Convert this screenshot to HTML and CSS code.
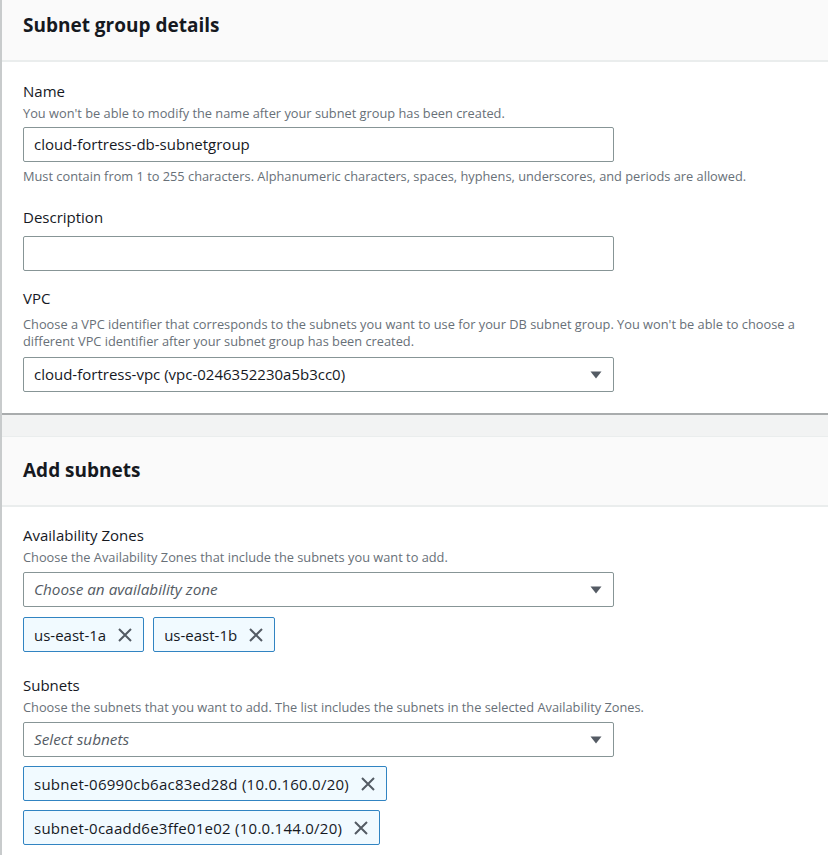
FILE: index.html
```html
<!DOCTYPE html>
<html lang="en">
<head>
<meta charset="utf-8">
<title>Subnet group</title>
<link rel="stylesheet" href="styles.css">
</head>
<body>
<div class="page">
  <section class="panel panel-first">
    <header class="panel-header header-cropped"><h2>Subnet group details</h2></header>
    <div class="panel-body body-first">
      <div class="field">
        <div class="label">Name</div>
        <div class="hint">You won't be able to modify the name after your subnet group has been created.</div>
        <div class="input">cloud-fortress-db-subnetgroup</div>
        <div class="hint after">Must contain from 1 to 255 characters. Alphanumeric characters, spaces, hyphens, underscores, and periods are allowed.</div>
      </div>
      <div class="field field-desc">
        <div class="label">Description</div>
        <div class="input input-nohint"></div>
      </div>
      <div class="field field-vpc">
        <div class="label">VPC</div>
        <div class="hint hint-multi">Choose a VPC identifier that corresponds to the subnets you want to use for your DB subnet group. You won't be able to choose a different VPC identifier after your subnet group has been created.</div>
        <div class="input select">
          <span>cloud-fortress-vpc (vpc-0246352230a5b3cc0)</span>
          <svg class="caret" width="12" height="8" viewBox="0 0 12 8"><path d="M0.5 0.5h11L6 7.5z" fill="#545b64"/></svg>
        </div>
      </div>
    </div>
  </section>

  <section class="panel panel-second">
    <header class="panel-header"><h2>Add subnets</h2></header>
    <div class="panel-body body-second">
      <div class="field">
        <div class="label">Availability Zones</div>
        <div class="hint">Choose the Availability Zones that include the subnets you want to add.</div>
        <div class="input select">
          <span class="placeholder">Choose an availability zone</span>
          <svg class="caret" width="12" height="8" viewBox="0 0 12 8"><path d="M0.5 0.5h11L6 7.5z" fill="#545b64"/></svg>
        </div>
        <div class="tokens tokens-row">
          <div class="token"><span>us-east-1a</span><svg class="x" width="16" height="16" viewBox="0 0 16 16"><path d="M2 2l12 12M14 2L2 14" stroke="#545b64" stroke-width="2" fill="none"/></svg></div>
          <div class="token"><span>us-east-1b</span><svg class="x" width="16" height="16" viewBox="0 0 16 16"><path d="M2 2l12 12M14 2L2 14" stroke="#545b64" stroke-width="2" fill="none"/></svg></div>
        </div>
      </div>
      <div class="field field-subnets">
        <div class="label">Subnets</div>
        <div class="hint">Choose the subnets that you want to add. The list includes the subnets in the selected Availability Zones.</div>
        <div class="input select">
          <span class="placeholder">Select subnets</span>
          <svg class="caret" width="12" height="8" viewBox="0 0 12 8"><path d="M0.5 0.5h11L6 7.5z" fill="#545b64"/></svg>
        </div>
        <div class="tokens tokens-col">
          <div class="token token-wide"><span>subnet-06990cb6ac83ed28d (10.0.160.0/20)</span><svg class="x" width="16" height="16" viewBox="0 0 16 16"><path d="M2 2l12 12M14 2L2 14" stroke="#545b64" stroke-width="2" fill="none"/></svg></div>
          <div class="token token-wide"><span>subnet-0caadd6e3ffe01e02 (10.0.144.0/20)</span><svg class="x" width="16" height="16" viewBox="0 0 16 16"><path d="M2 2l12 12M14 2L2 14" stroke="#545b64" stroke-width="2" fill="none"/></svg></div>
        </div>
      </div>
    </div>
  </section>
</div>
</body>
</html>
```

FILE: styles.css
```css
* { box-sizing: border-box; }
html, body { margin: 0; padding: 0; }
body {
  background: #f2f3f3;
  font-family: "Open Sans", "Noto Sans", Arial, sans-serif;
  color: #16191f;
  width: 828px;
  height: 855px;
  overflow: hidden;
}
.page {
  border-left: 2px solid #c8cbcc;
  min-height: 855px;
}
.panel {
  background: #fff;
}
.panel-first {
  border-bottom: 2px solid #a9acad;
}
.panel-second {
  margin-top: 21px;
  border-top: 1px solid #eaeded;
}
.panel-header {
  background: #fafafa;
  border-bottom: 2px solid #eaeded;
  height: 70px;
  padding: 0 21px 2px;
  display: flex;
  align-items: center;
}
.header-cropped {
  height: 62px;
  padding-bottom: 10px;
}
.panel-header h2 {
  margin: 0;
  font-size: 19px;
  font-weight: 700;
  line-height: 28px;
  color: #16191f;
}
.panel-body {
  padding: 16px 21px 21px;
}
.body-first {
  padding-top: 18px;
}
.body-second {
  padding-top: 17px;
}
.label {
  font-size: 15px;
  line-height: 22px;
  color: #16191f;
}
.hint {
  font-size: 12.8px;
  line-height: 18px;
  color: #687078;
  margin-top: 2px;
}
.hint.after {
  margin-top: 5px;
}
.hint-multi {
  line-height: 17px;
  margin-top: 7px;
}
.input {
  margin-top: 5px;
  width: 591px;
  height: 35px;
  border: 1px solid #879596;
  border-radius: 2px;
  background: #fff;
  padding: 0 10px;
  font-size: 15px;
  line-height: 33px;
  display: flex;
  align-items: center;
  justify-content: space-between;
}
.input-nohint { margin-top: 8px; }
.field-desc { margin-top: 21px; }
.field-vpc { margin-top: 16px; }
.field-vpc .input { margin-top: 7px; }
.field-subnets { margin-top: 22px; }
.select { margin-top: 6px; }
.placeholder {
  font-style: italic;
  font-size: 15.3px;
  color: #545b64;
}
.caret {
  margin-right: 1px;
}
.tokens {
  display: flex;
  gap: 9px;
  margin-top: 10px;
}
.tokens-col {
  flex-direction: column;
  align-items: flex-start;
  margin-top: 9px;
}
.token {
  height: 35px;
  display: inline-flex;
  align-items: center;
  gap: 11px;
  padding: 0 10px;
  background: #f1faff;
  border: 1px solid #3184c2;
  border-radius: 2px;
  font-size: 15px;
  color: #16191f;
}
.token-wide span {
  letter-spacing: 0.25px;
}
.x { flex: none; }
```
